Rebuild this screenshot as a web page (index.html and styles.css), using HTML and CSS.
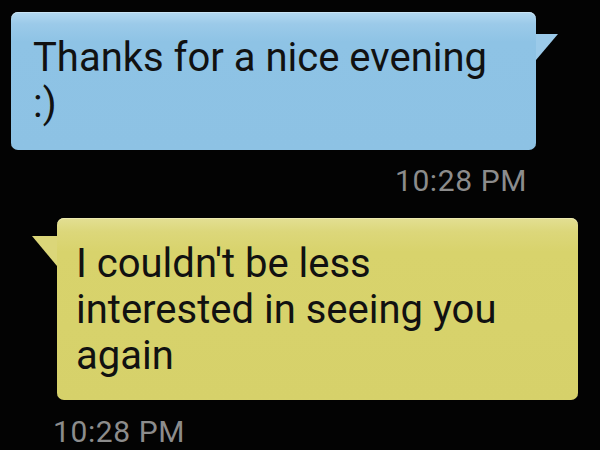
FILE: index.html
```html
<!DOCTYPE html>
<html lang="en">
<head>
  <meta charset="UTF-8">
  <meta name="viewport" content="width=device-width, initial-scale=1.0">
  <title>Messages</title>
  <link rel="stylesheet" href="styles.css">
</head>
<body>

  <div class="thread">
    <!-- sent message -->
    <div class="msg msg-sent">
      <div class="bubble bubble-blue">Thanks for a nice evening :)</div>
      <div class="msg-time">10:28 PM</div>
    </div>

    <!-- received message -->
    <div class="msg msg-received">
      <div class="bubble bubble-yellow">I couldn't be less interested in seeing you again</div>
      <div class="msg-time">10:28 PM</div>
    </div>
  </div>

</body>
</html>
```

FILE: styles.css
```css
html, body {
  margin: 0;
  padding: 0;
  background: #030303;
}
body {
  font-family: Roboto, "Noto Sans", "Liberation Sans", sans-serif;
  width: 600px;
  height: 450px;
  overflow: hidden;
}
.thread {
  display: flex;
  flex-direction: column;
  padding-top: 12px;
}
.msg {
  display: flex;
  flex-direction: column;
}
.bubble {
  position: relative;
  box-sizing: border-box;
  border-radius: 7px;
  color: #111;
  font-size: 40px;
  line-height: 46px;
}
.bubble::after {
  content: "";
  position: absolute;
}
.msg-time {
  color: #8c8c8c;
  font-size: 30px;
  letter-spacing: 0.6px;
  line-height: 28px;
  margin-top: 17px;
}

/* blue bubble, tail on the right */
.msg-sent {
  margin-left: 11px;
  width: 525px;
}
.bubble-blue {
  height: 138px;
  padding: 23px 30px 0 22px;
  background: linear-gradient(to bottom, #b3d8f0 0px, #9bcae9 12px, #8ec3e5 30px, #8dc2e4 100%);
  box-shadow: inset 0 1px 0 #c9e4f5;
}
.bubble-blue::after {
  left: 100%;
  top: 22px;
  width: 22px;
  height: 26px;
  background: #9bcae9;
  clip-path: polygon(0 0, 100% 0, 0 100%);
}
.msg-sent .msg-time {
  text-align: right;
  margin-right: 9px;
}

/* yellow bubble, tail on the left */
.msg-received {
  margin-top: 23px;
  margin-left: 57px;
  width: 521px;
}
.bubble-yellow {
  height: 182px;
  padding: 23px 60px 0 19px;
  background: linear-gradient(to bottom, #e3df93 0px, #dcd77a 14px, #d8d36c 34px, #d6d16a 100%);
  box-shadow: inset 0 1px 0 #ece9b0;
}
.bubble-yellow::after {
  right: 100%;
  top: 18px;
  width: 25px;
  height: 30px;
  background: #dbd679;
  clip-path: polygon(0 0, 100% 0, 100% 100%);
}
.msg-received .msg-time {
  margin-top: 18px;
  margin-left: -4px;
}
```
